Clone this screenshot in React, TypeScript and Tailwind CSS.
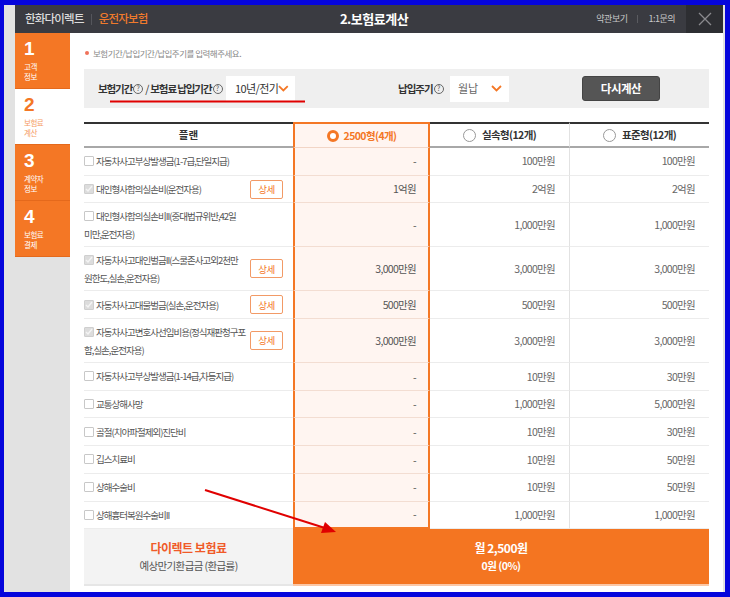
import React from 'react';

type Row = {
  label: string[];
  checked: boolean;
  detail: boolean;
  values: [string, string, string];
};

const rows: Row[] = [
  { label: ['자동차사고부상발생금(1-7급,단일지급)'], checked: false, detail: false, values: ['-', '100만원', '100만원'] },
  { label: ['대인형사합의실손비(운전자용)'], checked: true, detail: true, values: ['1억원', '2억원', '2억원'] },
  { label: ['대인형사합의실손비II(중대법규위반,42일', '미만,운전자용)'], checked: false, detail: false, values: ['-', '1,000만원', '1,000만원'] },
  { label: ['자동차사고대인벌금II(스쿨존사고외2천만', '원한도,실손,운전자용)'], checked: true, detail: true, values: ['3,000만원', '3,000만원', '3,000만원'] },
  { label: ['자동차사고대물벌금(실손,운전자용)'], checked: true, detail: true, values: ['500만원', '500만원', '500만원'] },
  { label: ['자동차사고변호사선임비용(정식재판청구포', '함,실손,운전자용)'], checked: true, detail: true, values: ['3,000만원', '3,000만원', '3,000만원'] },
  { label: ['자동차사고부상발생금(1-14급,차등지급)'], checked: false, detail: false, values: ['-', '10만원', '30만원'] },
  { label: ['교통상해사망'], checked: false, detail: false, values: ['-', '1,000만원', '5,000만원'] },
  { label: ['골절(치아파절제외)진단비'], checked: false, detail: false, values: ['-', '10만원', '30만원'] },
  { label: ['깁스치료비'], checked: false, detail: false, values: ['-', '10만원', '50만원'] },
  { label: ['상해수술비'], checked: false, detail: false, values: ['-', '10만원', '50만원'] },
  { label: ['상해흉터복원수술비II'], checked: false, detail: false, values: ['-', '1,000만원', '1,000만원'] },
];

const steps = [
  { n: '1', label: ['고객', '정보'], active: false },
  { n: '2', label: ['보험료', '계산'], active: true },
  { n: '3', label: ['계약자', '정보'], active: false },
  { n: '4', label: ['보험료', '결제'], active: false },
];

const Help = () => (
  <span className="inline-flex shrink-0 items-center justify-center w-[10px] h-[10px] rounded-full border border-[#666] text-[7px] leading-none font-normal text-[#555] ml-[1px] tracking-normal">?</span>
);

const Chevron = () => (
  <svg width="11" height="7" viewBox="0 0 11 7" fill="none">
    <path d="M1 1l4.5 4.5L10 1" stroke="#f47725" strokeWidth="1.8" />
  </svg>
);

const Checkbox: React.FC<{ checked: boolean }> = ({ checked }) => (
  <span className={`inline-flex shrink-0 items-center justify-center w-[10px] h-[10px] border rounded-[1px] mr-[2px] ${checked ? 'bg-[#dcdcdc] border-[#cfcfcf]' : 'bg-white border-[#c8c8c8]'}`}>
    {checked && (
      <svg width="8" height="8" viewBox="0 0 8 8" fill="none">
        <path d="M1 4l2 2 4-5" stroke="#f4f4f4" strokeWidth="1.4" />
      </svg>
    )}
  </span>
);

const Radio: React.FC<{ on: boolean }> = ({ on }) =>
  on ? (
    <span className="inline-block w-[12px] h-[12px] rounded-full border-[3px] border-[#f47725] bg-white mr-[5px]" />
  ) : (
    <span className="inline-block w-[13px] h-[13px] rounded-full border border-[#999] bg-white mr-[6px]" />
  );

export default function App() {
  return (
    <div className="relative w-[730px] h-[597px] bg-[#0505dc] pt-[5px] pl-[4px] pr-[5px] pb-[5px] font-['Noto_Sans_CJK_KR','Noto_Sans',sans-serif] overflow-hidden">
      <div className="w-full h-full bg-[#e2e2e2] pl-[11px] pr-[2px] flex flex-col">
        {/* header */}
        <div className="h-[28px] bg-[#3a3b41] flex items-center shrink-0">
          <div className="flex-1 basis-0 flex items-center pl-[10px]">
            <span className="text-[11.5px] text-[#dcdcdc] font-medium tracking-[-0.8px]">한화다이렉트</span>
            <span className="w-px h-[11px] bg-[#55565c] mx-[7px]" />
            <span className="text-[11.5px] text-[#ef7a2c] font-medium tracking-[-0.8px]">운전자보험</span>
          </div>
          <div className="text-[13px] text-white font-bold tracking-[-0.5px]">2.보험료계산</div>
          <div className="flex-1 basis-0 flex items-center justify-end h-full">
            <span className="text-[9px] text-[#c8c8c8] tracking-[-0.5px]">약관보기</span>
            <span className="w-px h-[8px] bg-[#5a5b60] mx-[10px]" />
            <span className="text-[9px] text-[#c8c8c8] tracking-[-0.5px]">1:1문의</span>
            <div className="ml-[11px] w-[37px] h-full bg-[#2d2e32] flex items-center justify-center">
              <svg width="14" height="14" viewBox="0 0 14 14">
                <path d="M1 1l12 12M13 1L1 13" stroke="#8a8a8e" strokeWidth="1.3" />
              </svg>
            </div>
          </div>
        </div>

        <div className="flex flex-1">
          {/* sidebar */}
          <div className="w-[55px] shrink-0 flex flex-col">
            {steps.map(s => (
              <div
                key={s.n}
                className={`h-[56px] pl-[9px] pt-[6px] border-b border-[#e4691c] ${s.active ? 'bg-white' : 'bg-[#f47725]'}`}
              >
                <div className={`font-['Liberation_Sans',sans-serif] text-[19px] font-bold leading-[19px] h-[20px] ${s.active ? 'text-[#f47725]' : 'text-white'}`}>{s.n}</div>
                <div className="mt-[3px]">
                  {s.label.map(l => (
                    <div key={l} className={`text-[7.5px] leading-[10px] tracking-[-0.5px] ${s.active ? 'text-[#f59b62]' : 'text-white'}`}>{l}</div>
                  ))}
                </div>
              </div>
            ))}
          </div>

          {/* main */}
          <div className="flex-1 bg-white px-[14px] pt-[14px]">
            <div className="flex items-center text-[8.5px] text-[#888] h-[12px] tracking-[-0.5px]">
              <span className="w-[4px] h-[4px] rounded-full bg-[#f0725a] mr-[4px] ml-[1px]" />
              보험기간/납입기간/납입주기를 입력해주세요.
            </div>

            <div className="mt-[10px] h-[39px] bg-[#efefef] flex items-center pl-[14px]">
              <div className="w-[124px] flex items-center text-[10.5px] font-bold text-[#333] tracking-[-1.1px] whitespace-nowrap">
                보험기간<Help />
                <span className="mx-[2px] font-normal">/</span>
                보험료 납입기간<Help />
              </div>
              <div className="ml-[4px] w-[69px] h-[26px] bg-white flex items-center justify-between pl-[9px] pr-[6px] text-[11px] text-[#333] tracking-[-0.6px] whitespace-nowrap">
                10년/전기
                <Chevron />
              </div>
              <div className="ml-[103px] w-[47px] flex items-center text-[10.5px] font-bold text-[#333] tracking-[-1px] whitespace-nowrap">
                납입주기<Help />
              </div>
              <div className="ml-[5px] w-[59px] h-[26px] bg-white flex items-center justify-between pl-[8px] pr-[7px] text-[11px] text-[#666]">
                월납
                <Chevron />
              </div>
              <button className="ml-[73px] w-[78px] h-[25px] bg-[#555555] border border-[#444] rounded-[3px] text-white text-[11.5px] font-bold tracking-[-0.5px]">
                다시계산
              </button>
            </div>

            {/* table */}
            <div className="mt-[14px] grid grid-cols-[209px_137px_140px_139px]">
              <div className="h-[26px] border-t-2 border-[#333] border-b-2 border-b-[#a8a8a8] flex items-center justify-center text-[10.5px] font-bold text-[#333]">
                플랜
              </div>
              <div className="h-[26px] border-2 border-[#f47725] border-b border-b-[#f2d5c6] bg-[#fff5f1] flex items-center justify-center text-[10.5px] font-bold text-[#f47725] tracking-[-0.6px]">
                <Radio on />2500형(4개)
              </div>
              <div className="h-[26px] border-t-2 border-[#333] border-b-2 border-b-[#a8a8a8] border-r border-r-[#e2e2e2] flex items-center justify-center text-[10.5px] font-bold text-[#333] tracking-[-0.6px]">
                <Radio on={false} />실속형(12개)
              </div>
              <div className="h-[26px] border-t-2 border-[#333] border-b-2 border-b-[#a8a8a8] flex items-center justify-center text-[10.5px] font-bold text-[#333] tracking-[-0.6px]">
                <Radio on={false} />표준형(12개)
              </div>

              {rows.map((r, i) => {
                const h = r.label.length > 1 ? 'h-[44px]' : 'h-[27.7px]';
                const last = i === rows.length - 1;
                return (
                  <React.Fragment key={i}>
                    <div className={`${h} border-b border-[#ececec] flex items-center justify-between pr-[10px]`}>
                      <div className="min-w-0 text-[9.5px] leading-[18px] text-[#555] tracking-[-1px] whitespace-nowrap">
                        {r.label.map((l, j) => (
                          <div key={j} className="flex items-center">
                            {j === 0 && <Checkbox checked={r.checked} />}
                            {l}
                          </div>
                        ))}
                      </div>
                      {r.detail && (
                        <button className="shrink-0 w-[33px] h-[19px] border border-[#f29a66] rounded-[2px] bg-white text-[9.5px] text-[#f47725] tracking-[-0.5px]">
                          상세
                        </button>
                      )}
                    </div>
                    <div className={`${h} border-x-2 border-[#f47725] ${last ? 'border-b-2 border-b-[#f47725]' : 'border-b border-b-[#f3ddd2]'} bg-[#fff5f1] flex items-center justify-end pr-[12px] text-[10.5px] text-[#555] tracking-[-0.7px]`}>
                      {r.values[0]}
                    </div>
                    <div className={`${h} border-b border-[#ececec] border-r border-r-[#e2e2e2] flex items-center justify-end pr-[14px] text-[10.5px] text-[#666] tracking-[-0.7px]`}>
                      {r.values[1]}
                    </div>
                    <div className={`${h} border-b border-[#ececec] flex items-center justify-end pr-[14px] text-[10.5px] text-[#666] tracking-[-0.7px]`}>
                      {r.values[2]}
                    </div>
                  </React.Fragment>
                );
              })}

              <div className="h-[57px] bg-[#f3f3f3] border-b-2 border-[#e6e6e6] flex flex-col items-center justify-center">
                <div className="text-[12px] font-bold text-[#f05a28] leading-[18px] tracking-[-0.5px]">다이렉트 보험료</div>
                <div className="text-[10.5px] text-[#555] leading-[17px] tracking-[-0.6px]">예상만기환급금 (환급률)</div>
              </div>
              <div className="col-span-3 h-[57px] bg-[#f47521] border-b-2 border-[#fbc7a6] flex flex-col items-center justify-center">
                <div className="text-[12px] font-bold text-white leading-[18px] tracking-[-0.5px]">월 2,500원</div>
                <div className="text-[10.5px] font-bold text-white leading-[17px] tracking-[-0.5px]">0원 (0%)</div>
              </div>
            </div>
          </div>
        </div>
      </div>

      {/* annotation overlay */}
      <svg className="absolute inset-0 pointer-events-none" width="730" height="597" viewBox="0 0 730 597">
        <line x1="110" y1="101.5" x2="305" y2="101.5" stroke="#e00000" strokeWidth="2.2" />
        <line x1="205" y1="490" x2="325" y2="528" stroke="#e00000" strokeWidth="2" />
        <path d="M336 532 L321 533 L325 522 Z" fill="#e00000" />
      </svg>
    </div>
  );
}
